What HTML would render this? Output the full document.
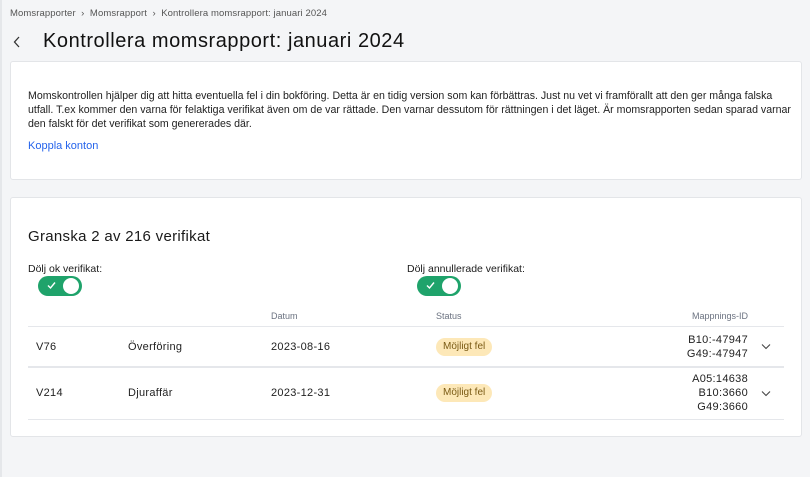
<!DOCTYPE html>
<html><head><meta charset="utf-8"><style>
*{box-sizing:border-box;margin:0;padding:0}
body{width:810px;height:477px;background:#f4f5f7;font-family:"Liberation Sans",sans-serif;color:#1c1c1c;position:relative;overflow:hidden}
.abs{position:absolute;white-space:nowrap}
.card{position:absolute;left:10px;width:792px;background:#fff;border:1px solid #e3e5e8;border-radius:3px}
.p{font-size:10.6px;line-height:14px;color:#222}
.tog{position:absolute;width:44px;height:20px;border-radius:10px;background:#1fa36b}
.tog .k{position:absolute;right:3px;top:2px;width:16px;height:16px;border-radius:50%;background:#fff}
.tog svg{position:absolute;left:9px;top:5px}
.th{font-size:9px;color:#6b7280}
.td{font-size:11px;color:#222;letter-spacing:.3px}
.hr{position:absolute;left:28px;width:756px;height:1px;background:#e5e7eb}
.badge{position:absolute;background:#fde8b8;color:#7a5a14;font-size:10px;border-radius:9px;padding:3px 7px;height:18px;line-height:12px}
.map{position:absolute;right:62px;text-align:right;font-size:11px;line-height:14px;color:#222;letter-spacing:.3px}
</style></head><body>
<div class="abs" style="left:0;top:0;width:2px;height:477px;background:#e5e7ea"></div>
<div class="abs" style="left:10px;top:8px;font-size:9.5px;color:#555;letter-spacing:.1px">Momsrapporter &nbsp;›&nbsp; Momsrapport &nbsp;›&nbsp; Kontrollera momsrapport: januari 2024</div>
<svg class="abs" style="left:13px;top:36px" width="8" height="12"><path d="M6 1L1.5 6 6 11" fill="none" stroke="#333" stroke-width="1.3"/></svg>
<div class="abs" style="left:43px;top:30px;font-size:20px;color:#111;letter-spacing:.55px">Kontrollera momsrapport: januari 2024</div>
<div class="card" style="top:61px;height:119px">
<div class="abs p" style="left:17px;top:27px">Momskontrollen hjälper dig att hitta eventuella fel i din bokföring. Detta är en tidig version som kan förbättras. Just nu vet vi framförallt att den ger många falska<br>utfall. T.ex kommer den varna för felaktiga verifikat även om de var rättade. Den varnar dessutom för rättningen i det läget. Är momsrapporten sedan sparad varnar<br>den falskt för det verifikat som genererades där.</div>
<div class="abs" style="left:17px;top:78px;font-size:11px;color:#2563eb">Koppla konton</div>
</div>
<div class="card" style="top:197px;height:240px">
<div class="abs" style="left:17px;top:30px;font-size:15px;color:#1a1a1a;letter-spacing:.3px">Granska 2 av 216 verifikat</div>
<div class="abs" style="left:17px;top:65px;font-size:10.5px">Dölj ok verifikat:</div>
<div class="abs" style="left:396px;top:65px;font-size:10.5px">Dölj annullerade verifikat:</div>
<div class="tog" style="left:27px;top:78px"><svg width="9" height="9"><path d="M1 4.5L3.5 7 8 1.5" fill="none" stroke="#fff" stroke-width="1.4"/></svg><div class="k"></div></div>
<div class="tog" style="left:406px;top:78px"><svg width="9" height="9"><path d="M1 4.5L3.5 7 8 1.5" fill="none" stroke="#fff" stroke-width="1.4"/></svg><div class="k"></div></div>
</div>
<div class="abs th" style="left:271px;top:311px">Datum</div>
<div class="abs th" style="left:436px;top:311px">Status</div>
<div class="abs th" style="left:692px;top:311px">Mappnings-ID</div>
<div class="hr" style="top:326px"></div>
<div class="abs td" style="left:36px;top:341px">V76</div>
<div class="abs td" style="left:128px;top:341px">Överföring</div>
<div class="abs td" style="left:271px;top:341px">2023-08-16</div>
<div class="badge" style="left:436px;top:338px">Möjligt fel</div>
<div class="map" style="top:333px">B10:-47947<br>G49:-47947</div>
<svg class="abs" style="left:761px;top:343px" width="10" height="7"><path d="M1 1.5L5 5.5 9 1.5" fill="none" stroke="#444" stroke-width="1.1"/></svg>
<div class="hr" style="top:366px;height:2px"></div>
<div class="abs td" style="left:36px;top:387px">V214</div>
<div class="abs td" style="left:128px;top:387px">Djuraffär</div>
<div class="abs td" style="left:271px;top:387px">2023-12-31</div>
<div class="badge" style="left:436px;top:384px">Möjligt fel</div>
<div class="map" style="top:372px">A05:14638<br>B10:3660<br>G49:3660</div>
<svg class="abs" style="left:761px;top:390px" width="10" height="7"><path d="M1 1.5L5 5.5 9 1.5" fill="none" stroke="#444" stroke-width="1.1"/></svg>
<div class="hr" style="top:419px"></div>
</body></html>
